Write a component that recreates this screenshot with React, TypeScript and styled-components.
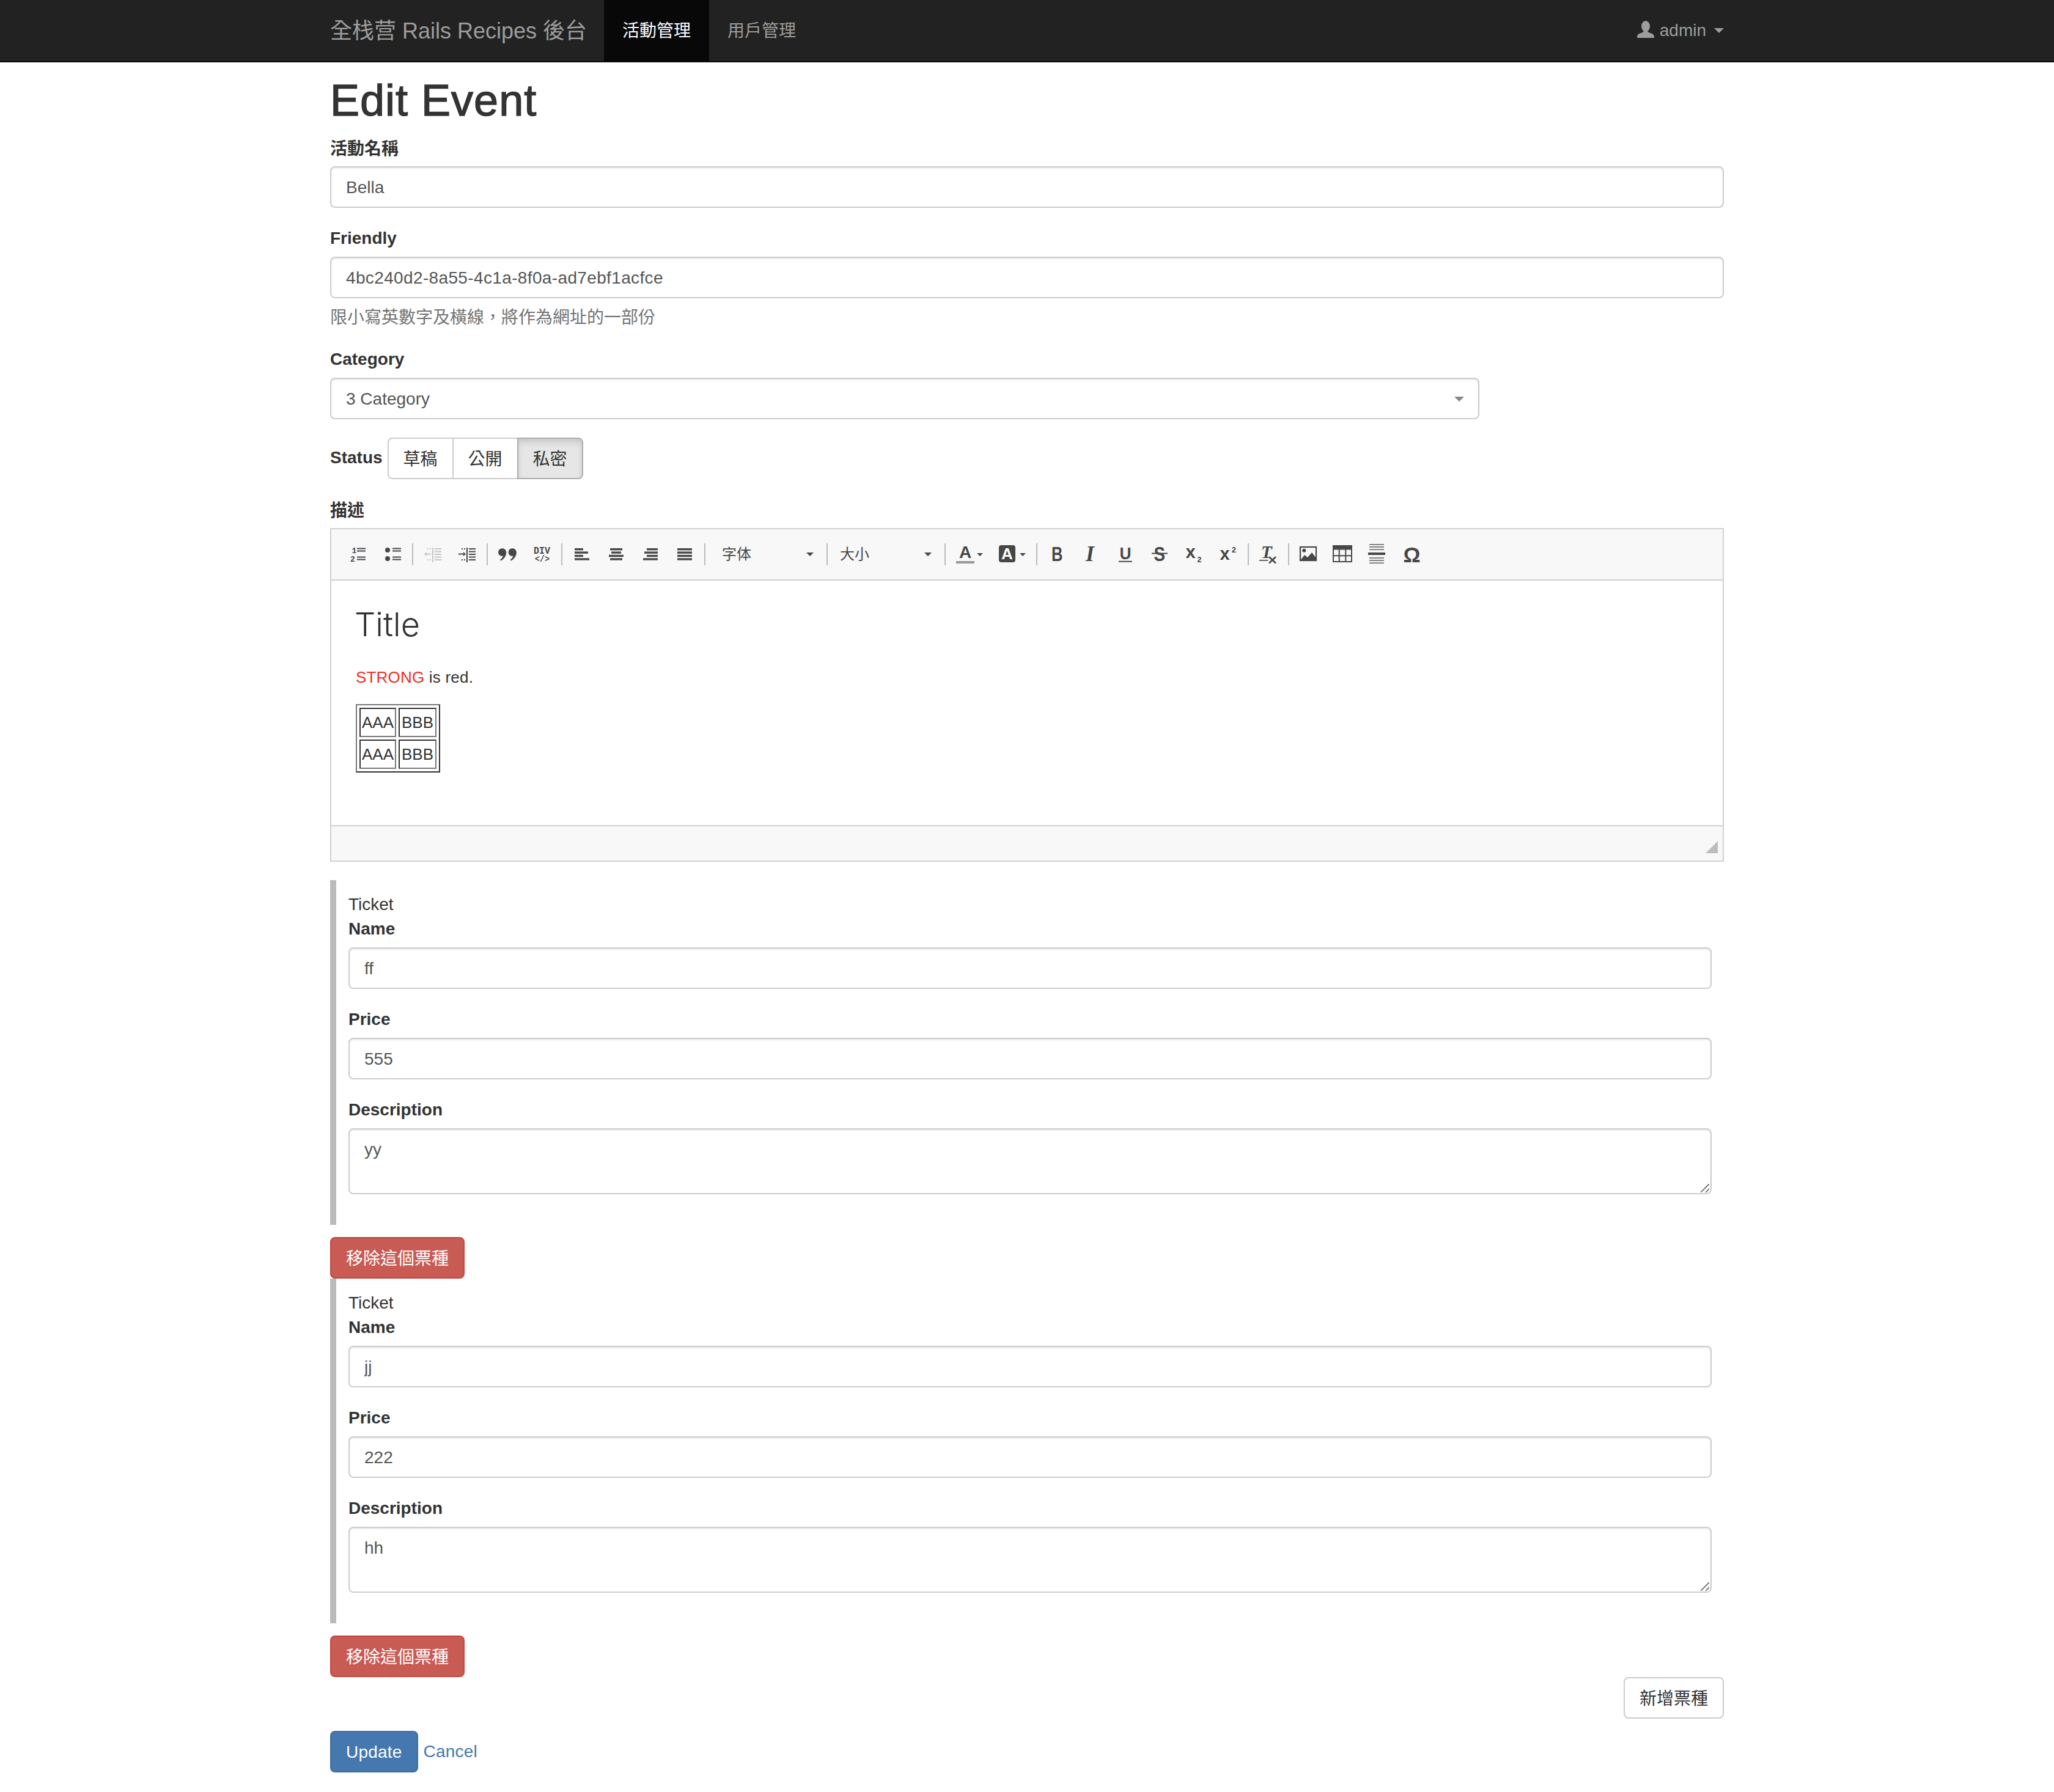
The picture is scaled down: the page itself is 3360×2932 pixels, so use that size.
import React from 'react';
import styled, { createGlobalStyle } from 'styled-components';

const Global = createGlobalStyle`
  html, body { margin: 0; padding: 0; background: #fff; }
  body {
    font-family: "Liberation Sans", "Noto Sans CJK TC", sans-serif;
    font-size: 28px;
    line-height: 40px;
    color: #333;
  }
  * { box-sizing: border-box; }
`;

const Navbar = styled.nav`
  height: 102px;
  background: #222;
  border-bottom: 2px solid #080808;
`;
const NavInner = styled.div`
  width: 2280px;
  margin: 0 auto;
  height: 100px;
  display: flex;
  align-items: stretch;
`;
const Brand = styled.a`
  font-size: 36px;
  line-height: 98px;
  padding-top: 2px;
  color: #9d9d9d;
  padding-right: 28px;
`;
const NavItem = styled.a<{ $active?: boolean }>`
  line-height: 98px;
  padding: 2px 30px 0;
  color: ${p => (p.$active ? '#fff' : '#9d9d9d')};
  background: ${p => (p.$active ? '#080808' : 'transparent')};
`;
const UserMenu = styled.a`
  margin-left: auto;
  display: flex;
  align-items: center;
  gap: 9px;
  color: #9d9d9d;
`;
const UserIcon = styled.svg`
  width: 28px;
  height: 28px;
  margin-top: -4px;
  fill: #9d9d9d;
`;
const NavCaret = styled.span`
  width: 0;
  height: 0;
  margin-left: 4px;
  border-top: 8px solid #9d9d9d;
  border-left: 8px solid transparent;
  border-right: 8px solid transparent;
`;

const Page = styled.main`
  width: 2280px;
  margin: 0 auto;
  padding-bottom: 32px;
`;
const Heading = styled.h1`
  margin: 23px 0 18px;
  font-size: 72px;
  line-height: 79px;
  font-weight: 400;
  letter-spacing: 1px;
  -webkit-text-stroke: 1.4px #333;
  color: #333;
`;
const Group = styled.div`
  margin-bottom: 30px;
`;
const Label = styled.label<{ $cjk?: boolean }>`
  display: block;
  font-weight: 700;
  padding-top: ${p => (p.$cjk ? 2 : 0)}px;
  margin-bottom: ${p => (p.$cjk ? 8 : 10)}px;
`;
const fieldCss = `
  display: block;
  width: 100%;
  border: 2px solid #ccc;
  border-radius: 8px;
  box-shadow: inset 0 2px 2px rgba(0,0,0,.075);
  padding: 13px 24px 11px;
  font-family: inherit;
  font-size: 28px;
  line-height: 40px;
  color: #555;
  background: #fff;
  outline: none;
`;
const Input = styled.input<{ $spaced?: boolean }>`
  ${fieldCss}
  height: 68px;
  letter-spacing: ${p => (p.$spaced ? '0.36px' : 'normal')};
`;
const AreaWrap = styled.div`
  position: relative;
`;
const TextArea = styled.textarea`
  ${fieldCss}
  height: 108px;
  resize: none;
`;
const AreaGrip = styled.svg`
  position: absolute;
  right: 4px;
  bottom: 3px;
  width: 14px;
  height: 14px;
  stroke: #666;
  stroke-width: 1.6;
  fill: none;
`;
const Help = styled.p`
  margin: 12px 0 -2px;
  color: #737373;
`;
const Select = styled.div`
  ${fieldCss}
  width: 1880px;
  height: 68px;
  display: flex;
  align-items: center;
  justify-content: space-between;
  padding-right: 23px;
`;
const SelectCaret = styled.span`
  width: 0;
  height: 0;
  border-top: 8px solid #888;
  border-left: 8px solid transparent;
  border-right: 8px solid transparent;
`;
const StatusRow = styled.div`
  display: flex;
  align-items: center;
  gap: 8px;
  margin-bottom: 30px;
`;
const StatusLabel = styled.label`
  font-weight: 700;
  margin-bottom: 3px;
`;
const BtnGroup = styled.div`
  display: flex;
`;
const Seg = styled.button<{ $active?: boolean }>`
  height: 68px;
  padding: 3px 24px 0;
  margin-left: -2px;
  border: 2px solid ${p => (p.$active ? '#adadad' : '#ccc')};
  background: ${p => (p.$active ? '#e6e6e6' : '#fff')};
  box-shadow: ${p => (p.$active ? 'inset 0 6px 10px rgba(0,0,0,.125)' : 'none')};
  font: inherit;
  color: #333;
  position: relative;
  z-index: ${p => (p.$active ? 1 : 0)};
  &:first-child { margin-left: 0; border-radius: 8px 0 0 8px; }
  &:last-child { border-radius: 0 8px 8px 0; }
`;

const Editor = styled.div`
  border: 2px solid #d1d1d1;
  margin-bottom: 30px;
`;
const Toolbar = styled.div`
  height: 84px;
  background: #f8f8f8;
  border-bottom: 2px solid #d1d1d1;
  display: flex;
  align-items: center;
  padding-left: 16px;
`;
const ToolButton = styled.span<{ $wide?: boolean }>`
  width: ${p => (p.$wide ? 70 : 56)}px;
  padding-left: 12px;
  display: flex;
  align-items: center;
  flex: none;
`;
const ToolIcon = styled.svg<{ $faded?: boolean }>`
  width: 32px;
  height: 32px;
  overflow: visible;
  flex: none;
  fill: ${p => (p.$faded ? '#c6c6c6' : '#474747')};
  stroke: none;
`;
const ToolCaret = styled.span`
  margin-left: 3px;
  width: 0;
  height: 0;
  border-top: 5px solid #474747;
  border-left: 5px solid transparent;
  border-right: 5px solid transparent;
`;
const ToolSep = styled.span`
  width: 2px;
  height: 36px;
  margin: 0 4px;
  background: #bcbcbc;
  flex: none;
`;
const Combo = styled.span<{ $w: number; $pl: number }>`
  width: ${p => p.$w}px;
  padding: 0 17px 0 ${p => p.$pl}px;
  display: flex;
  align-items: center;
  justify-content: space-between;
  font-size: 24px;
  color: #474747;
  flex: none;
`;
const ComboCaret = styled.span`
  width: 0;
  height: 0;
  border-top: 6px solid #474747;
  border-left: 6px solid transparent;
  border-right: 6px solid transparent;
`;
const EditArea = styled.div`
  height: 400px;
  padding: 1px 40px;
`;
const EditTitle = styled.h1`
  margin: 41px 0 37px -2px;
  font-family: Inter, "Liberation Sans", sans-serif;
  font-size: 54px;
  line-height: 59px;
  font-weight: 300;
`;
const EditPara = styled.p`
  margin: 0 0 22px;
  font-size: 26px;
  line-height: 41.6px;
  letter-spacing: 0.2px;
`;
const Red = styled.span`
  color: #ee2f24;
`;
const EditTable = styled.table`
  border-style: solid;
  border-width: 2px;
  border-color: #777 #333 #333 #777;
  border-spacing: 4px;
  border-collapse: separate;
  font-size: 26px;
  line-height: 40px;
`;
const EditCell = styled.td<{ $wide?: boolean }>`
  border-style: solid;
  border-width: 2px;
  border-color: #333 #777 #777 #333;
  padding: 2px ${p => (p.$wide ? 3 : 2)}px;
`;
const EditFooter = styled.div`
  height: 58px;
  background: #f8f8f8;
  border-top: 2px solid #d1d1d1;
  display: flex;
  justify-content: flex-end;
  padding: 24px 8px 0 0;
`;
const ResizeMark = styled.svg`
  width: 20px;
  height: 20px;
  fill: #bdbdbd;
`;

const Ticket = styled.section`
  width: 2260px;
  border-left: 10px solid #bbb;
  padding: 20px 0 20px 20px;
  margin-bottom: 20px;
`;
const DangerBtn = styled.button`
  display: block;
  height: 68px;
  padding: 3px 24px 0;
  border: 2px solid #c2463f;
  border-radius: 8px;
  background: #c95b55;
  color: #fff;
  font: inherit;
`;
const Actions = styled.div`
  display: flex;
  justify-content: flex-end;
  margin-bottom: 20px;
`;
const DefaultBtn = styled.button`
  height: 68px;
  padding: 3px 24px 0;
  border: 2px solid #ccc;
  border-radius: 8px;
  background: #fff;
  color: #333;
  font: inherit;
`;
const Footer = styled.div`
  display: flex;
  align-items: center;
  gap: 9px;
`;
const PrimaryBtn = styled.button`
  height: 68px;
  padding: 2px 24px 0;
  border: 2px solid #3d6d9e;
  border-radius: 8px;
  background: #4478ae;
  color: #fff;
  font: inherit;
  letter-spacing: 0.2px;
`;
const Cancel = styled.a`
  color: #4478ae;
  letter-spacing: 0.2px;
`;

const I = (p: { faded?: boolean; children: React.ReactNode }) => (
  <ToolButton>
    <ToolIcon viewBox="0 0 32 32" $faded={p.faded}>{p.children}</ToolIcon>
  </ToolButton>
);
const R = (x: number, y: number, w: number, h: number, fill?: string) => (
  <rect x={x} y={y} width={w} height={h} fill={fill} />
);
const bold = { fontFamily: '"Liberation Sans", sans-serif', fontWeight: 700 } as const;
const serif = { fontFamily: '"Liberation Serif", serif', fontWeight: 700, fontStyle: 'italic' } as const;
const mono = { fontFamily: '"Liberation Mono", monospace', fontWeight: 700 } as const;

const IndentLines = () => (
  <>
    {R(15, 5, 2, 24)}
    {[6, 10.5, 15, 19.5, 24].map(y => <React.Fragment key={y}>{R(19, y, 11, 2)}</React.Fragment>)}
    {R(7, 6, 2, 2)}{R(11, 6, 2, 2)}{R(7, 24, 2, 2)}{R(11, 24, 2, 2)}
  </>
);

const aligned = (offsets: number[]) => (
  <>
    {[6, 11.4, 16.8, 22.2].map((y, i) => (
      <React.Fragment key={y}>{R(4 + offsets[i * 2], y, offsets[i * 2 + 1], 3.4)}</React.Fragment>
    ))}
  </>
);

const TicketForm = (p: { name: string; price: string; desc: string }) => (
  <Ticket>
    <div>Ticket</div>
    <Group>
      <Label>Name</Label>
      <Input value={p.name} readOnly />
    </Group>
    <Group>
      <Label>Price</Label>
      <Input value={p.price} readOnly />
    </Group>
    <Group>
      <Label>Description</Label>
      <AreaWrap>
        <TextArea value={p.desc} readOnly />
        <AreaGrip viewBox="0 0 14 14">
          <path d="M0 14L14 0M8 14l6-6" />
        </AreaGrip>
      </AreaWrap>
    </Group>
  </Ticket>
);

export default function App() {
  return (
    <>
      <Global />
      <Navbar>
        <NavInner>
          <Brand>全栈营 Rails Recipes 後台</Brand>
          <NavItem $active>活動管理</NavItem>
          <NavItem>用戶管理</NavItem>
          <UserMenu>
            <UserIcon viewBox="0 0 28 28">
              <ellipse cx="14" cy="9" rx="7" ry="9" />
              <path d="M0 28c0-4 1-6 4-7l6-2.5 1-2h6l1 2 6 2.5c3 1 4 3 4 7z" />
            </UserIcon>
            admin
            <NavCaret />
          </UserMenu>
        </NavInner>
      </Navbar>
      <Page>
        <Heading>Edit Event</Heading>
        <Group>
          <Label $cjk>活動名稱</Label>
          <Input value="Bella" readOnly />
        </Group>
        <Group>
          <Label>Friendly</Label>
          <Input $spaced value="4bc240d2-8a55-4c1a-8f0a-ad7ebf1acfce" readOnly />
          <Help>限小寫英數字及橫線，將作為網址的一部份</Help>
        </Group>
        <Group>
          <Label>Category</Label>
          <Select>
            3 Category
            <SelectCaret />
          </Select>
        </Group>
        <StatusRow>
          <StatusLabel>Status</StatusLabel>
          <BtnGroup>
            <Seg>草稿</Seg>
            <Seg>公開</Seg>
            <Seg $active>私密</Seg>
          </BtnGroup>
        </StatusRow>
        <Label $cjk>描述</Label>
        <Editor>
          <Toolbar>
            <I>
              <text x="5.5" y="14" fontSize="13" style={mono}>1</text>
              <text x="3" y="28" fontSize="13" style={mono}>2</text>
              {R(14, 5.5, 14, 2)}{R(14, 9.5, 14, 2)}{R(14, 19.5, 14, 2)}{R(14, 23.5, 14, 2)}
            </I>
            <I>
              <circle cx="8" cy="9" r="4" />
              <circle cx="8" cy="23" r="4" />
              {R(16, 5.5, 14, 2)}{R(16, 9.5, 14, 2)}{R(16, 19.5, 14, 2)}{R(16, 23.5, 14, 2)}
            </I>
            <ToolSep />
            <I faded>
              <IndentLines />
              <path d="M2 15.5l4-3.5v2.5h7v2H6V19z" />
            </I>
            <I>
              <IndentLines />
              <path d="M14 15.5L10 12v2.5H2v2h8V19z" />
            </I>
            <ToolSep />
            <I>
              <path d="M8 6.3a6.3 6.3 0 0 1 6.3 6.3c0 6-3.5 11-9 14l-1.3-1.5c2.5-2 4.5-4.5 5-6.5a6.3 6.3 0 1 1-1-12.3z" />
              <path d="M24.6 6.3a6.3 6.3 0 0 1 6.3 6.3c0 6-3.5 11-9 14l-1.3-1.5c2.5-2 4.5-4.5 5-6.5a6.3 6.3 0 1 1-1-12.3z" />
            </I>
            <I>
              <text x="16.5" y="15" textAnchor="middle" fontSize="17" textLength="27" lengthAdjust="spacingAndGlyphs" style={mono}>DIV</text>
              <text x="17" y="28" textAnchor="middle" fontSize="15" textLength="24" lengthAdjust="spacingAndGlyphs" style={mono}>{'</>'}</text>
            </I>
            <ToolSep />
            <I>{aligned([0, 14, 0, 22, 0, 14, 0, 24])}</I>
            <I>{aligned([2, 20, 4, 16, 0, 24, 2, 20])}</I>
            <I>{aligned([6, 18, 2, 22, 6, 18, 0, 24])}</I>
            <I>{aligned([0, 24, 0, 24, 0, 24, 0, 24])}</I>
            <ToolSep />
            <Combo $w={190} $pl={23}>字体<ComboCaret /></Combo>
            <ToolSep />
            <Combo $w={183} $pl={16}>大小<ComboCaret /></Combo>
            <ToolSep />
            <ToolButton $wide>
              <ToolIcon viewBox="0 0 32 32">
                <text x="16" y="22" textAnchor="middle" fontSize="28" style={bold}>A</text>
                {R(1, 27, 30, 4, '#999')}
              </ToolIcon>
              <ToolCaret />
            </ToolButton>
            <ToolButton $wide>
              <ToolIcon viewBox="0 0 32 32">
                <rect x="1" y="1" width="27" height="28" rx="4" />
                <text x="14.5" y="24" textAnchor="middle" fontSize="26" fill="#fff" style={bold}>A</text>
              </ToolIcon>
              <ToolCaret />
            </ToolButton>
            <ToolSep />
            <I><text x="7" y="27.3" fontSize="34" textLength="18.5" lengthAdjust="spacingAndGlyphs" style={bold}>B</text></I>
            <I><text x="7" y="27" fontSize="36" style={serif}>I</text></I>
            <I>
              <text x="6.5" y="24" fontSize="28" textLength="19" lengthAdjust="spacingAndGlyphs" style={bold}>U</text>
              {R(5, 26.7, 22, 2)}
            </I>
            <I>
              <text x="6.5" y="27.3" fontSize="34" textLength="18.5" lengthAdjust="spacingAndGlyphs" style={bold}>S</text>
              {R(3, 13.5, 26, 2)}
            </I>
            <I>
              <text x="2.5" y="22.3" fontSize="29" style={bold}>x</text>
              <text x="21" y="28.5" fontSize="13" style={mono}>2</text>
            </I>
            <I>
              <text x="2.5" y="25" fontSize="29" style={bold}>x</text>
              <text x="21.5" y="13" fontSize="13" style={mono}>2</text>
            </I>
            <ToolSep />
            <I>
              <text x="4" y="22.3" fontSize="29" style={serif}>T</text>
              {R(1, 25, 14.5, 1.6)}
              <path d="M17 20l11 10.5M28 20L17 30.5" stroke="#474747" strokeWidth="2.6" fill="none" />
            </I>
            <ToolSep />
            <I>
              <rect x="2" y="4" width="26" height="22" fill="none" stroke="#474747" strokeWidth="2.2" />
              <circle cx="8.3" cy="9.7" r="3" />
              <path d="M2 26l7-9 5 4 7-8 7 9v4z" />
            </I>
            <I>
              {R(-1, 1, 32, 7.5)}
              <path d="M0 8v20h30V8M9.7 8v20M20.3 8v20M0 18.3h30" fill="none" stroke="#474747" strokeWidth="2" />
            </I>
            <I>
              {R(1, 13, 28, 4)}
              {[-1, 3, 7.3, 21, 25, 29.3].map(y => <React.Fragment key={y}>{R(3, y, 24, 1.8, '#777')}</React.Fragment>)}
            </I>
            <I><text x="2.5" y="29" fontSize="35" style={bold}>Ω</text></I>
          </Toolbar>
          <EditArea>
            <EditTitle>Title</EditTitle>
            <EditPara><Red>STRONG</Red> is red.</EditPara>
            <EditTable>
              <tbody>
                <tr><EditCell>AAA</EditCell><EditCell $wide>BBB</EditCell></tr>
                <tr><EditCell>AAA</EditCell><EditCell $wide>BBB</EditCell></tr>
              </tbody>
            </EditTable>
          </EditArea>
          <EditFooter>
            <ResizeMark viewBox="0 0 20 20"><polygon points="20,0 20,20 0,20" /></ResizeMark>
          </EditFooter>
        </Editor>
        <TicketForm name="ff" price="555" desc="yy" />
        <DangerBtn>移除這個票種</DangerBtn>
        <TicketForm name="jj" price="222" desc="hh" />
        <DangerBtn>移除這個票種</DangerBtn>
        <Actions>
          <DefaultBtn>新增票種</DefaultBtn>
        </Actions>
        <Footer>
          <PrimaryBtn>Update</PrimaryBtn>
          <Cancel>Cancel</Cancel>
        </Footer>
      </Page>
    </>
  );
}
